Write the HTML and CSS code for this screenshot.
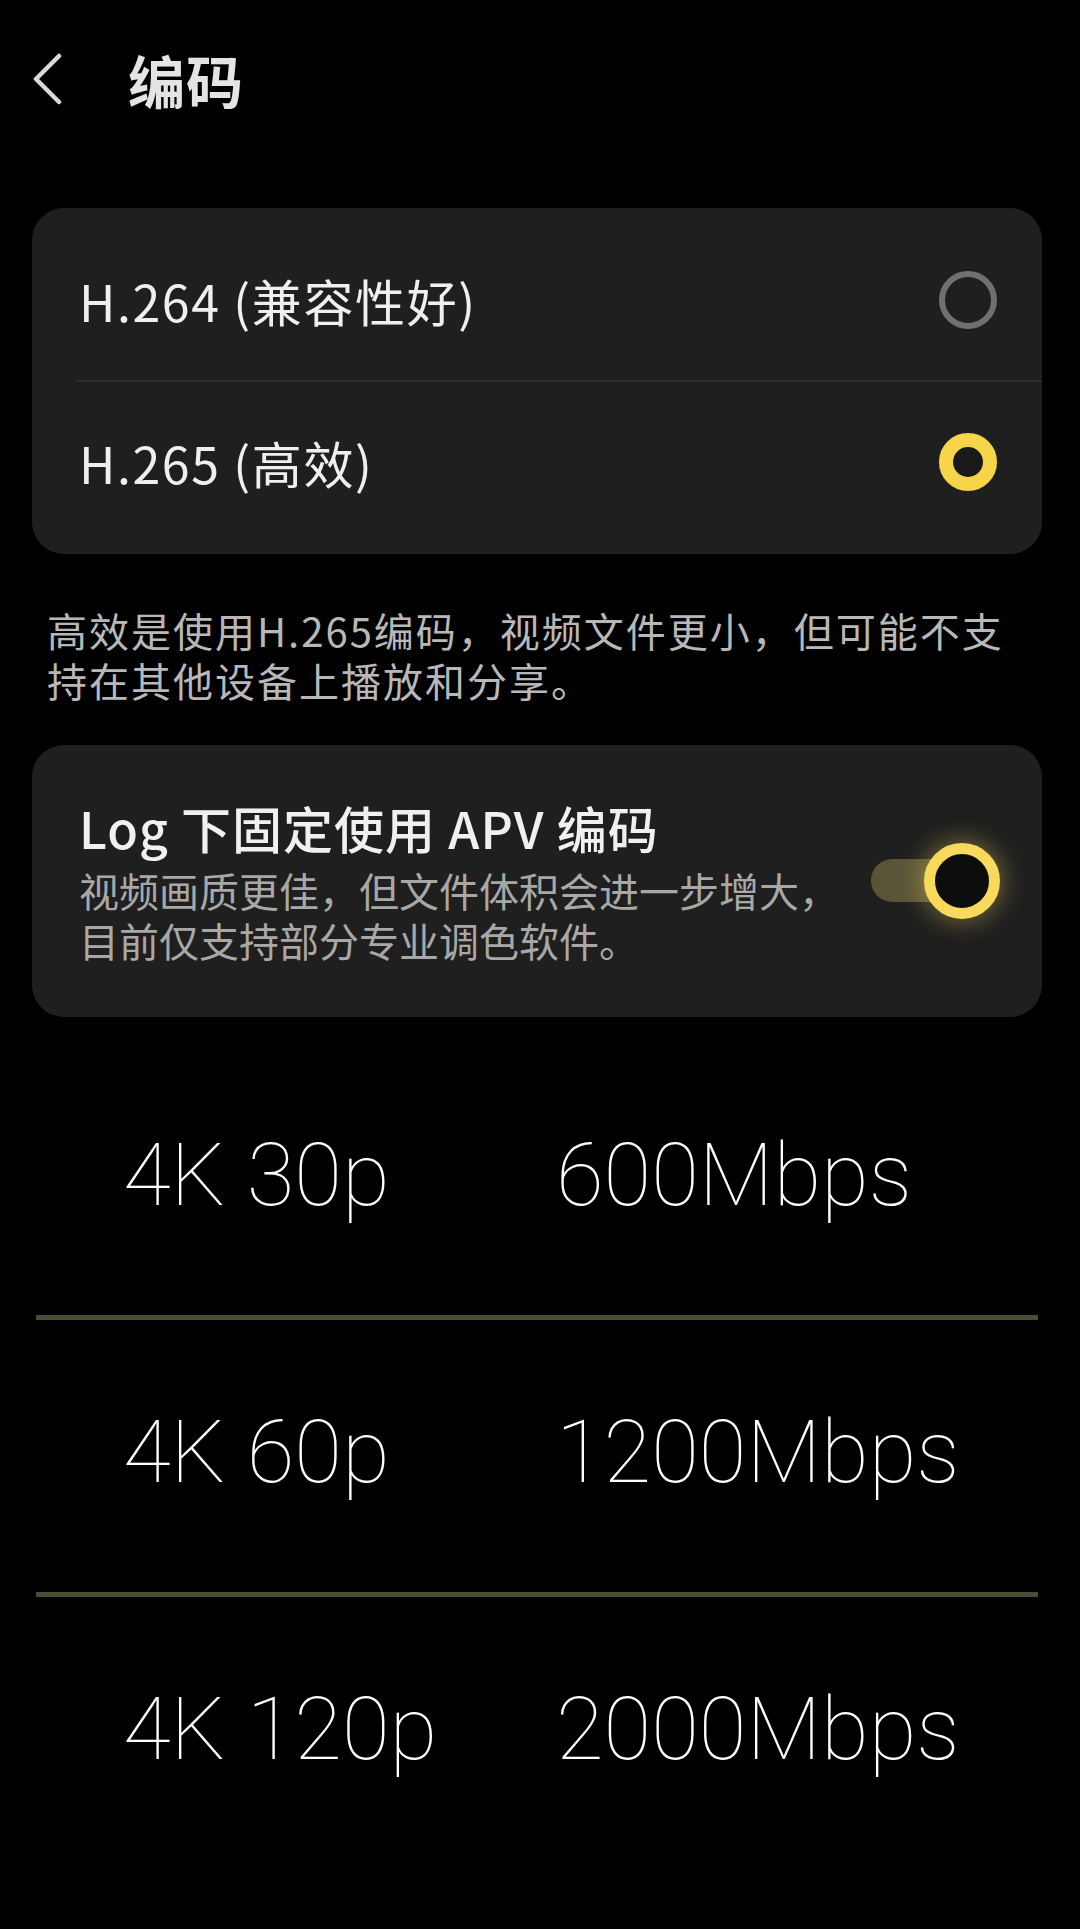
FILE: index.html
```html
<!DOCTYPE html>
<html lang="zh-CN">
<head>
  <meta charset="UTF-8">
  <title>编码</title>
  <link rel="stylesheet" href="styles.css">
</head>
<body>
  <header class="top-bar">
    <svg class="back" viewBox="0 0 30 52" width="30" height="52">
      <path d="M26 3 L3 26 L26 49" fill="none" stroke="#d9d9d9" stroke-width="4.5" stroke-linecap="round" stroke-linejoin="round"/>
    </svg>
    <h1>编码</h1>
  </header>

  <div class="card codec-list">
    <div class="option">
      <span>H.264 (兼容性好)</span>
      <span class="radio"></span>
    </div>
    <div class="divider"></div>
    <div class="option">
      <span>H.265 (高效)</span>
      <span class="radio checked"></span>
    </div>
  </div>

  <p class="hint">高效是使用H.265编码，视频文件更小，但可能不支持在其他设备上播放和分享。</p>

  <div class="card apv">
    <div class="apv-text">
      <div class="apv-title">Log 下固定使用 APV 编码</div>
      <div class="apv-desc">视频画质更佳，但文件体积会进一步增大，目前仅支持部分专业调色软件。</div>
    </div>
    <div class="switch on">
      <span class="track"></span>
      <span class="knob"></span>
    </div>
  </div>

  <div class="rates">
    <div class="rate"><span>4K 30p</span><span>600Mbps</span></div>
    <div class="rate"><span>4K 60p</span><span>1200Mbps</span></div>
    <div class="rate"><span>4K 120p</span><span>2000Mbps</span></div>
  </div>
</body>
</html>
```

FILE: styles.css
```css
body {
  margin: 0;
  background: #000;
  color: #eee;
  font-family: "Noto Sans CJK SC", "Noto Sans", sans-serif;
}
.top-bar {
  display: flex;
  align-items: center;
  height: 158px;
  padding-left: 33px;
  margin-bottom: 50px;
}
.back {
  display: block;
}
.top-bar h1 {
  margin: 0 0 0 65px;
  font-size: 57px;
  font-weight: 600;
  letter-spacing: 1px;
  color: #e4e4e4;
}
.card {
  background: #1f1f1f;
  border-radius: 32px;
  margin: 0 38px 0 32px;
}
.codec-list {
  padding: 12px 0;
}
.option {
  display: flex;
  align-items: center;
  justify-content: space-between;
  height: 160px;
  padding: 0 45px 0 47px;
  font-size: 50px;
  letter-spacing: 1.6px;
  color: #efefef;
}
.divider {
  height: 2px;
  margin-left: 45px;
  background: #2e2e2e;
}
.radio {
  width: 58px;
  height: 58px;
  box-sizing: border-box;
  border-radius: 50%;
  border: 6px solid #707070;
}
.radio.checked {
  border: 14px solid #f6d548;
  background: #1a1a1a;
}
.hint {
  margin: 51px 0 40px;
  padding: 0 0 0 47px;
  max-width: 975px;
  font-size: 40px;
  line-height: 50px;
  letter-spacing: 2px;
  color: #b8b8b8;
}
.apv {
  display: flex;
  align-items: center;
  gap: 20px;
  padding: 52px 42px 52px 47px;
}
.apv-text {
  flex: 1;
}
.apv-title {
  font-size: 50px;
  line-height: 60px;
  letter-spacing: 1px;
  font-weight: 500;
  color: #f0f0f0;
  margin-bottom: 8px;
}
.apv-desc {
  font-size: 40px;
  line-height: 50px;
  color: #a8a8a8;
}
.switch {
  position: relative;
  width: 129px;
  height: 76px;
}
.switch .track {
  position: absolute;
  left: 0;
  top: 16px;
  width: 112px;
  height: 43px;
  border-radius: 22px;
  background: #5a5537;
}
.switch .knob {
  position: absolute;
  right: 0;
  top: 0;
  width: 76px;
  height: 76px;
  box-sizing: border-box;
  border-radius: 50%;
  border: 11px solid #f7d95c;
  background: #0d0d0d;
  box-shadow: 0 0 22px 4px rgba(247, 217, 92, 0.35);
}
.rates {
  margin: 26px 42px 0 36px;
}
.rate {
  display: grid;
  grid-template-columns: 433px 1fr;
  padding: 82px 0 90px 87px;
  font-family: Roboto, "Liberation Sans", sans-serif;
  font-weight: 100;
  font-size: 87px;
  line-height: 100px;
  color: #fff;
  border-bottom: 5px solid #4e4b37;
}
.rate:last-child {
  border-bottom: none;
}
```
